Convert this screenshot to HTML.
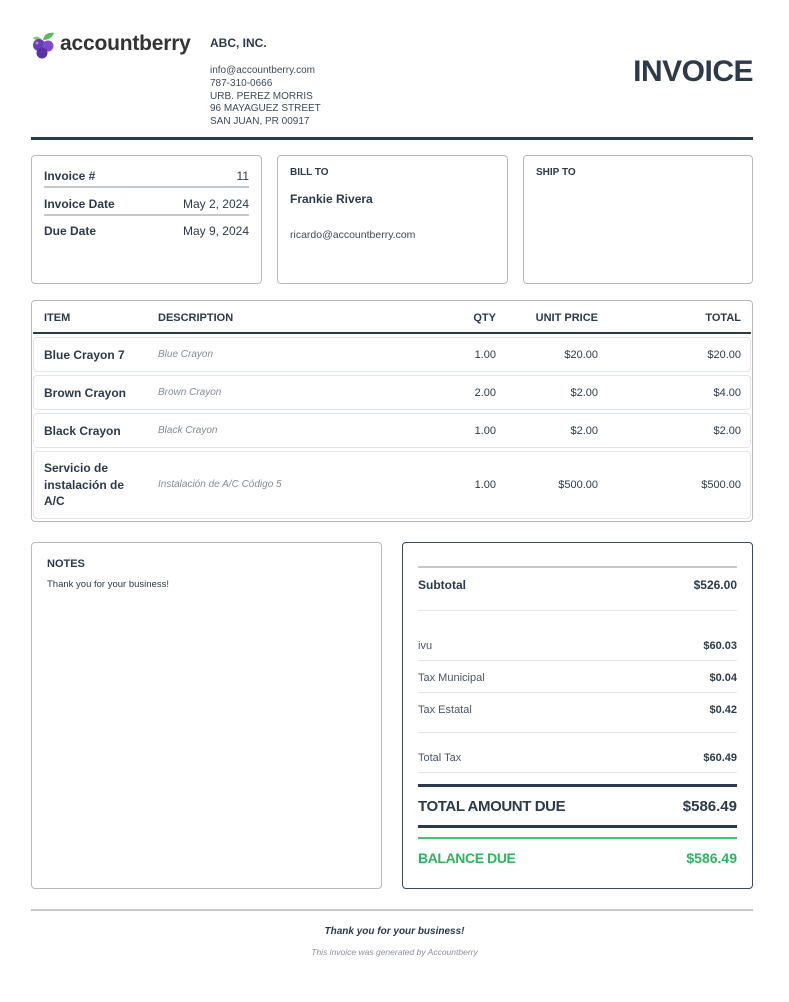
<!DOCTYPE html>
<html><head><meta charset="utf-8"><style>
*{margin:0;padding:0;box-sizing:border-box}
body{width:789px;height:1002px;background:#fff;font-family:"Liberation Sans",sans-serif;color:#2d3a4a;position:relative;overflow:hidden}
.a{position:absolute;white-space:nowrap}
.box{position:absolute;border:1.5px solid #b7bbc0;border-radius:4px}
.b{font-weight:bold}
.r{text-align:right}
.hl{position:absolute;height:1px;background:#e3e6ea}
</style></head><body>
<!-- logo -->
<svg class="a" style="left:30px;top:31px" width="28" height="28" viewBox="0 0 28 28">
<path d="M13 9 C14 3 19 1 24 2 C22 7 18 9 13 9Z" fill="#5cb85c"/>
<path d="M12 9 C9 5 5 5 3 7 C6 10 9 10 12 9Z" fill="#7ccf6a"/>
<circle cx="9" cy="14" r="6" fill="#6a3fb5"/>
<circle cx="18" cy="15" r="5.5" fill="#7b4cc6"/>
<circle cx="12" cy="22" r="5.5" fill="#5b32a6"/>
<circle cx="7" cy="12" r="1.5" fill="#a58be0"/>
</svg>
<div class="a b" style="left:60px;top:32px;font-size:21px;color:#333;letter-spacing:-0.2px">accountberry</div>
<div class="a b" style="left:210px;top:36px;font-size:12px">ABC, INC.</div>
<div class="a" style="left:210px;top:65px;font-size:10px;line-height:12.8px;color:#3d4a5a">info@accountberry.com<br>787-310-0666<br>URB. PEREZ MORRIS<br>96 MAYAGUEZ STREET<br>SAN JUAN, PR 00917</div>
<div class="a b" style="right:36px;top:55px;font-size:30px;letter-spacing:-0.5px">INVOICE</div>
<div class="a" style="left:31px;top:137px;width:722px;height:3px;background:#2d3a4a"></div>

<div class="box" style="left:31px;top:155px;width:231px;height:129px"></div>
<div class="a b" style="left:44px;top:169px;font-size:12px">Invoice #</div>
<div class="a" style="right:540px;top:169px;font-size:12px">11</div>
<div class="a" style="left:44px;top:186px;width:205px;height:1.5px;background:#c5c9ce"></div>
<div class="a b" style="left:44px;top:197px;font-size:12px">Invoice Date</div>
<div class="a" style="right:540px;top:197px;font-size:12px">May 2, 2024</div>
<div class="a" style="left:44px;top:214px;width:205px;height:1.5px;background:#c5c9ce"></div>
<div class="a b" style="left:44px;top:224px;font-size:12px">Due Date</div>
<div class="a" style="right:540px;top:224px;font-size:12px">May 9, 2024</div>

<div class="box" style="left:277px;top:155px;width:231px;height:129px"></div>
<div class="a b" style="left:290px;top:167px;font-size:10px">BILL TO</div>
<div class="a b" style="left:290px;top:192px;font-size:12px">Frankie Rivera</div>
<div class="a" style="left:290px;top:229px;font-size:10.5px;color:#3d4a5a">ricardo@accountberry.com</div>

<div class="box" style="left:523px;top:155px;width:230px;height:129px"></div>
<div class="a b" style="left:536px;top:167px;font-size:10px">SHIP TO</div>

<!-- table -->
<div class="box" style="left:31px;top:300px;width:722px;height:222px"></div>
<div class="a b" style="left:44px;top:312px;font-size:11px">ITEM</div>
<div class="a b" style="left:158px;top:312px;font-size:11px">DESCRIPTION</div>
<div class="a b r" style="right:293px;top:312px;font-size:11px">QTY</div>
<div class="a b r" style="right:191px;top:312px;font-size:11px">UNIT PRICE</div>
<div class="a b r" style="right:48px;top:312px;font-size:11px">TOTAL</div>
<div class="a" style="left:33px;top:332px;width:718px;height:2px;background:#2d3a4a"></div>

<div class="box" style="left:33px;top:337px;width:718px;height:35px;border:1px solid #e1e4e8"></div>
<div class="box" style="left:33px;top:375px;width:718px;height:35px;border:1px solid #e1e4e8"></div>
<div class="box" style="left:33px;top:413px;width:718px;height:35px;border:1px solid #e1e4e8"></div>
<div class="box" style="left:33px;top:451px;width:718px;height:68px;border:1px solid #e1e4e8"></div>

<div class="a b" style="left:44px;top:348px;font-size:12px">Blue Crayon 7</div>
<div class="a" style="left:158px;top:349px;font-size:10px;font-style:italic;color:#858c95">Blue Crayon</div>
<div class="a r" style="right:293px;top:349px;font-size:11px">1.00</div>
<div class="a r" style="right:191px;top:349px;font-size:11px">$20.00</div>
<div class="a r" style="right:48px;top:349px;font-size:11px">$20.00</div>

<div class="a b" style="left:44px;top:386px;font-size:12px">Brown Crayon</div>
<div class="a" style="left:158px;top:387px;font-size:10px;font-style:italic;color:#858c95">Brown Crayon</div>
<div class="a r" style="right:293px;top:387px;font-size:11px">2.00</div>
<div class="a r" style="right:191px;top:387px;font-size:11px">$2.00</div>
<div class="a r" style="right:48px;top:387px;font-size:11px">$4.00</div>

<div class="a b" style="left:44px;top:424px;font-size:12px">Black Crayon</div>
<div class="a" style="left:158px;top:425px;font-size:10px;font-style:italic;color:#858c95">Black Crayon</div>
<div class="a r" style="right:293px;top:425px;font-size:11px">1.00</div>
<div class="a r" style="right:191px;top:425px;font-size:11px">$2.00</div>
<div class="a r" style="right:48px;top:425px;font-size:11px">$2.00</div>

<div class="a b" style="left:44px;top:460px;font-size:12px;line-height:16.5px">Servicio de<br>instalación de<br>A/C</div>
<div class="a" style="left:158px;top:479px;font-size:10px;font-style:italic;color:#858c95">Instalación de A/C Código 5</div>
<div class="a r" style="right:293px;top:479px;font-size:11px">1.00</div>
<div class="a r" style="right:191px;top:479px;font-size:11px">$500.00</div>
<div class="a r" style="right:48px;top:479px;font-size:11px">$500.00</div>

<!-- notes -->
<div class="box" style="left:31px;top:542px;width:351px;height:347px"></div>
<div class="a b" style="left:47px;top:558px;font-size:11px">NOTES</div>
<div class="a" style="left:47px;top:579px;font-size:9.5px">Thank you for your business!</div>

<!-- totals -->
<div class="box" style="left:402px;top:542px;width:351px;height:347px;border-color:#3a4a5e"></div>
<div class="a" style="left:418px;top:566px;width:319px;height:1.5px;background:#c5c9ce"></div>
<div class="a b" style="left:418px;top:578px;font-size:12px">Subtotal</div>
<div class="a b r" style="right:52px;top:578px;font-size:12px">$526.00</div>
<div class="hl" style="left:418px;top:610px;width:319px"></div>
<div class="a" style="left:418px;top:640px;font-size:11px;color:#4a5666">ivu</div>
<div class="a b r" style="right:52px;top:640px;font-size:11px">$60.03</div>
<div class="hl" style="left:418px;top:660px;width:319px"></div>
<div class="a" style="left:418px;top:672px;font-size:11px;color:#4a5666">Tax Municipal</div>
<div class="a b r" style="right:52px;top:672px;font-size:11px">$0.04</div>
<div class="hl" style="left:418px;top:692px;width:319px"></div>
<div class="a" style="left:418px;top:704px;font-size:11px;color:#4a5666">Tax Estatal</div>
<div class="a b r" style="right:52px;top:704px;font-size:11px">$0.42</div>
<div class="hl" style="left:418px;top:732px;width:319px"></div>
<div class="a" style="left:418px;top:752px;font-size:11px;color:#4a5666">Total Tax</div>
<div class="a b r" style="right:52px;top:752px;font-size:11px">$60.49</div>
<div class="hl" style="left:418px;top:772px;width:319px"></div>
<div class="a" style="left:418px;top:784px;width:319px;height:3px;background:#2d3a4a"></div>
<div class="a b" style="left:418px;top:798px;font-size:15px;letter-spacing:-0.4px">TOTAL AMOUNT DUE</div>
<div class="a b r" style="right:52px;top:798px;font-size:15px">$586.49</div>
<div class="a" style="left:418px;top:825px;width:319px;height:3px;background:#2d3a4a"></div>
<div class="a" style="left:418px;top:837px;width:319px;height:2px;background:#3cc46a"></div>
<div class="a b" style="left:418px;top:850px;font-size:14px;color:#2eb35f;letter-spacing:-0.4px">BALANCE DUE</div>
<div class="a b r" style="right:52px;top:850px;font-size:14px;color:#2eb35f">$586.49</div>

<!-- footer -->
<div class="a" style="left:31px;top:909px;width:722px;height:1.5px;background:#c5c9ce"></div>
<div class="a b" style="left:0;width:789px;text-align:center;top:926px;font-size:10px;font-style:italic">Thank you for your business!</div>
<div class="a" style="left:0;width:789px;text-align:center;top:947px;font-size:8.5px;font-style:italic;color:#8a9099">This invoice was generated by Accountberry</div>
</body></html>
